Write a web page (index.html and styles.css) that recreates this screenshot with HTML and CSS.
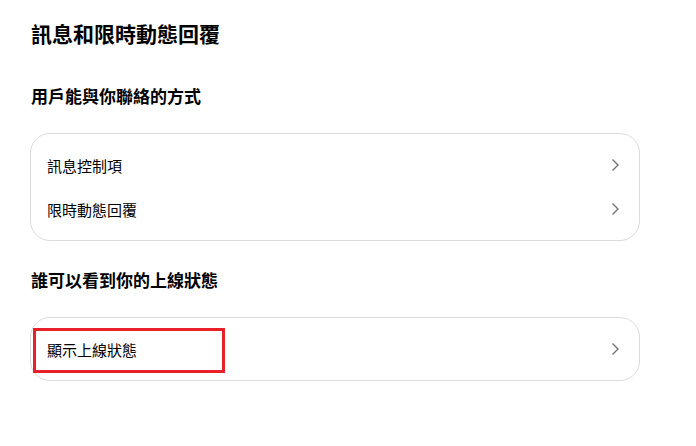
FILE: index.html
```html
<!DOCTYPE html>
<html lang="zh-Hant">
<head>
    <meta charset="UTF-8">
    <meta name="viewport" content="width=device-width, initial-scale=1.0">
    <title>訊息和限時動態回覆</title>
    <link rel="stylesheet" href="styles.css">
</head>
<body>
    <div class="page">
        <h1 class="title">訊息和限時動態回覆</h1>

        <h2 class="section-title">用戶能與你聯絡的方式</h2>
        <div class="card">
            <div class="row">
                <span>訊息控制項</span>
                <svg class="chevron" width="8" height="12" viewBox="0 0 8 12"><polyline points="1.5,0.5 7,6 1.5,11.5"/></svg>
            </div>
            <div class="row">
                <span>限時動態回覆</span>
                <svg class="chevron" width="8" height="12" viewBox="0 0 8 12"><polyline points="1.5,0.5 7,6 1.5,11.5"/></svg>
            </div>
        </div>

        <h2 class="section-title second">誰可以看到你的上線狀態</h2>
        <div class="card">
            <div class="row">
                <span>顯示上線狀態</span>
                <svg class="chevron" width="8" height="12" viewBox="0 0 8 12"><polyline points="1.5,0.5 7,6 1.5,11.5"/></svg>
                <div class="highlight"></div>
            </div>
        </div>
    </div>
</body>
</html>
```

FILE: styles.css
```css
body { margin: 0; background: #fff; color: #000; font-family: "Noto Sans CJK TC", "Noto Sans", Arial, sans-serif; }
.page { padding: 19px 56px 0 30px; }
.title { margin: 0; font-size: 21px; line-height: 28px; font-weight: 700; padding-left: 1px; }
.section-title { margin: 37px 0 25px; font-size: 17px; line-height: 24px; font-weight: 700; padding-left: 1px; }
.section-title.second { margin-top: 27px; }
.card { border: 1px solid #dbdbdb; border-radius: 20px; padding: 9px 0; }
.row { position: relative; height: 44px; display: flex; align-items: center; justify-content: space-between; padding: 0 20px 0 16px; font-size: 15px; }
.chevron { fill: none; stroke: #737373; stroke-width: 1.4; }
.highlight { position: absolute; left: 2px; top: 1px; width: 186px; height: 39px; border: 3px solid #e8202a; }
```
